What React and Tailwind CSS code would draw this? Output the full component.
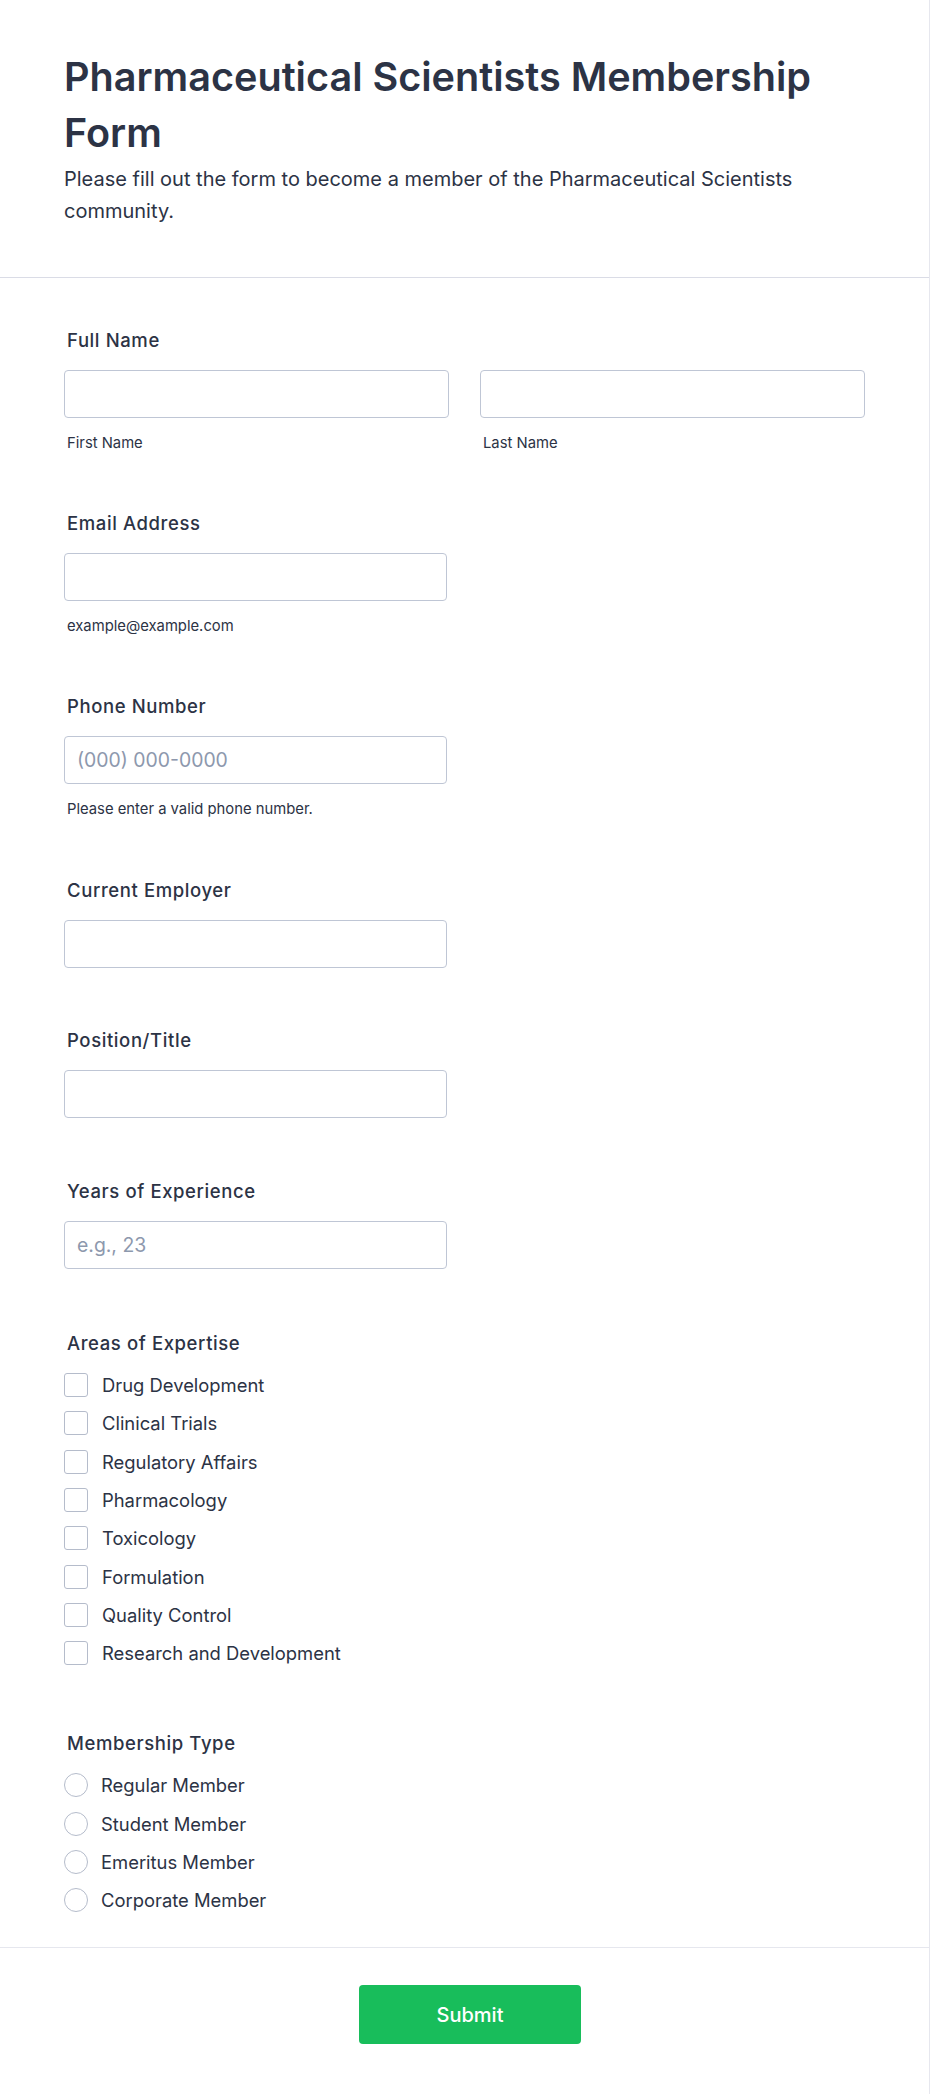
import React from "react";

const Label = ({ children }) => (
  <div className="pl-[3px] text-[18.5px] leading-[28px] font-medium tracking-[0.6px] text-[#2c3345]">{children}</div>
);

const Input = ({ placeholder, className = "" }) => (
  <input
    type="text"
    placeholder={placeholder}
    className={`h-[48px] rounded-[4px] border border-[#bfc6d5] bg-white px-3 text-[19.4px] text-[#2c3345] placeholder:text-[#8d98ad] outline-none ${className}`}
  />
);

const Sub = ({ children }) => (
  <div className="mt-[15px] pl-[3px] text-[14.8px] leading-[20px] text-[#2c3345]">{children}</div>
);

const areas = [
  "Drug Development",
  "Clinical Trials",
  "Regulatory Affairs",
  "Pharmacology",
  "Toxicology",
  "Formulation",
  "Quality Control",
  "Research and Development",
];

const memberships = ["Regular Member", "Student Member", "Emeritus Member", "Corporate Member"];

export default function App() {
  return (
    <div
      className="w-[930px] bg-white text-[#2c3345] border-r border-[#e6e7ee]"
      style={{ fontFamily: "Inter, 'Noto Sans', sans-serif" }}
    >
      <header className="px-16 pt-[49px] pb-[50px] border-b border-[#dadce6]">
        <h1 className="text-[39.6px] leading-[56px] font-semibold text-[#2c3345]">
          Pharmaceutical Scientists Membership Form
        </h1>
        <p className="mt-[2px] text-[20px] leading-[32px] text-[#2c3345]">
          Please fill out the form to become a member of the Pharmaceutical Scientists community.
        </p>
      </header>

      <main className="px-16 pt-[48px] pb-[35px] border-b border-[#e6e7ee]">
        {/* Full Name */}
        <div className="mb-[56px]">
          <Label>Full Name</Label>
          <div className="mt-4 grid grid-cols-2 gap-[31px]">
            <div className="flex flex-col">
              <Input className="w-full" />
              <Sub>First Name</Sub>
            </div>
            <div className="flex flex-col">
              <Input className="w-full" />
              <Sub>Last Name</Sub>
            </div>
          </div>
        </div>

        {/* Email */}
        <div className="mb-[56px] flex flex-col">
          <Label>Email Address</Label>
          <Input className="mt-4 w-[383px]" />
          <Sub>example@example.com</Sub>
        </div>

        {/* Phone */}
        <div className="mb-[57px] flex flex-col">
          <Label>Phone Number</Label>
          <Input className="mt-4 w-[383px]" placeholder="(000) 000-0000" />
          <Sub>Please enter a valid phone number.</Sub>
        </div>

        {/* Employer */}
        <div className="mb-[58px] flex flex-col">
          <Label>Current Employer</Label>
          <Input className="mt-4 w-[383px]" />
        </div>

        {/* Position */}
        <div className="mb-[59px] flex flex-col">
          <Label>Position/Title</Label>
          <Input className="mt-4 w-[383px]" />
        </div>

        {/* Years */}
        <div className="mb-[60px] flex flex-col">
          <Label>Years of Experience</Label>
          <Input className="mt-4 w-[383px]" placeholder="e.g., 23" />
        </div>

        {/* Areas */}
        <div className="mb-[64px]">
          <Label>Areas of Expertise</Label>
          <div className="mt-4 flex flex-col gap-[14.33px]">
            {areas.map((a) => (
              <label key={a} className="flex h-6 items-center gap-[14px]">
                <span className="h-6 w-6 shrink-0 rounded-[3px] border border-[#b5bccb] bg-white" />
                <span className="text-[18.4px] leading-6 text-[#2c3345]">{a}</span>
              </label>
            ))}
          </div>
        </div>

        {/* Membership */}
        <div>
          <Label>Membership Type</Label>
          <div className="mt-4 flex flex-col gap-[14.33px]">
            {memberships.map((m) => (
              <label key={m} className="flex h-6 items-center gap-[13px]">
                <span className="h-6 w-6 shrink-0 rounded-full border border-[#b5bccb] bg-white" />
                <span className="text-[18.4px] leading-6 text-[#2c3345]">{m}</span>
              </label>
            ))}
          </div>
        </div>
      </main>

      <footer className="flex justify-center pl-[11px] pt-[37px] pb-[50px]">
        <button className="h-[59px] w-[222px] rounded-[4px] bg-[#18bd5b] text-[20px] font-medium text-white">
          Submit
        </button>
      </footer>
    </div>
  );
}
